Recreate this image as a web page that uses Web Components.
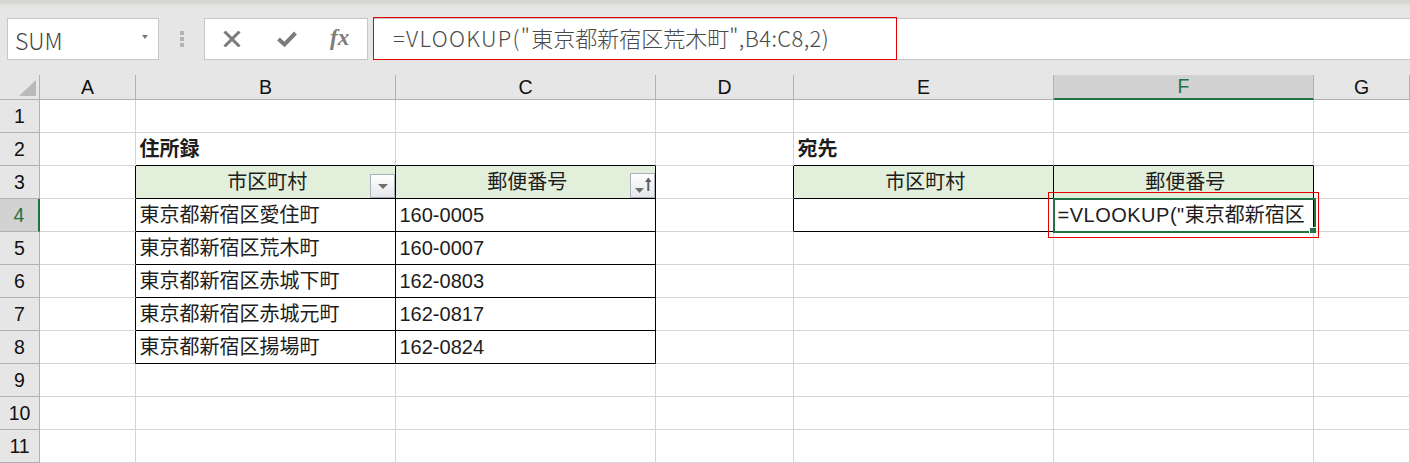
<!DOCTYPE html>
<html lang="ja">
<head>
<meta charset="utf-8">
<title>VLOOKUP</title>
<style>
    html, body { margin: 0; background: #fff; overflow: hidden; }
</style>
</head>
<body>
<excel-window></excel-window>

<script>
const TEXT_FONT = `"Liberation Sans", "Noto Sans CJK JP", sans-serif`;

class FormulaBar extends HTMLElement {
    connectedCallback() {
        let shadowRoot = this.attachShadow({mode: 'open'})
        shadowRoot.innerHTML = `
        <style>
            :host {
                display: block;
                height: 75px;
                box-sizing: border-box;
                background: linear-gradient(#d6d5d3 0, #d6d5d3 3px, #e2e2e1 5px, #e6e6e6 8px);
                padding-top: 18px;
                font-family: ${TEXT_FONT};
            }
            .row { display: flex; align-items: flex-start; height: 42px; }
            .name {
                width: 152px;
                height: 42px;
                margin-left: 7px;
                box-sizing: border-box;
                background: #fff;
                border: 1px solid #c6c6c6;
                display: flex;
                align-items: center;
                justify-content: space-between;
                padding: 1px 10px 0 7px;
                font-family: "Noto Sans CJK JP", sans-serif;
                font-weight: 300;
                font-size: 23px;
                color: #444;
            }
            .name i {
                margin-top: -6px;
                border: 3.5px solid transparent;
                border-top: 4px solid #777;
                border-bottom: 0;
            }
            .grip {
                width: 45px;
                display: flex;
                flex-direction: column;
                align-items: center;
                gap: 2px;
                padding-top: 13px;
            }
            .grip b { width: 4px; height: 4px; background: #b4b4b4; }
            .buttons {
                width: 164px;
                height: 42px;
                box-sizing: border-box;
                background: #fff;
                border: 1px solid #c6c6c6;
                display: flex;
                align-items: center;
            }
            .buttons svg { display: block; }
            .fx {
                font: italic bold 23px "Liberation Serif", serif;
                color: #7c7c7c;
                margin-left: 33px;
                margin-top: -2px;
            }
            .input {
                position: relative;
                flex: 1;
                height: 42px;
                margin-left: 5px;
                box-sizing: border-box;
                background: #fff;
                border-bottom: 1px solid #c6c6c6;
                border-top: 1px solid #c6c6c6;
                padding-left: 20px;
                line-height: 36px;
                font-size: 22px;
                color: #4a4a4a;
                font-family: "Noto Sans CJK JP", sans-serif;
                font-weight: 300;
                white-space: nowrap;
            }
            .input .head { letter-spacing: 1.3px; }
            .input .tail { letter-spacing: .4px; }
            .mark {
                position: absolute;
                left: 0;
                top: -2px;
                width: 524px;
                height: 43px;
                box-sizing: border-box;
                border: 1px solid #e60000;
            }
        </style>
        <div class="row">
            <div class="name">SUM<i></i></div>
            <div class="grip"><b></b><b></b><b></b></div>
            <div class="buttons">
                <svg width="18" height="16" viewBox="0 0 18 16" style="margin-left:18px">
                    <path d="M1.5 .5 L16.5 15.5 M16.5 .5 L1.5 15.5" stroke="#7c7c7c" stroke-width="3" fill="none"/>
                </svg>
                <svg width="20" height="16" viewBox="0 0 20 16" style="margin-left:36px">
                    <path d="M1.5 8 L7.5 13.5 L18.5 2" stroke="#7c7c7c" stroke-width="4" fill="none"/>
                </svg>
                <span class="fx">fx</span>
            </div>
            <div class="input"><span class="head">=VLOOKUP("</span>東京都新宿区荒木町<span class="tail">",B4:C8,2)</span><div class="mark"></div></div>
        </div>
        `
    }
}

class FilterButton extends HTMLElement {
    connectedCallback() {
        let sorted = this.hasAttribute('sorted')
        let shadowRoot = this.attachShadow({mode: 'open'})
        shadowRoot.innerHTML = `
        <style>
            :host {
                position: absolute;
                right: 0;
                bottom: 0;
                box-sizing: border-box;
                border: 1px solid #aab1ba;
                background: linear-gradient(#fff, #e6e7ea);
                display: block;
            }
            svg { display: block; }
        </style>
        ${sorted
            ? `<svg width="23" height="23" viewBox="0 0 23 23">
                <path d="M4 14 H13 L8.5 19 Z" fill="#6f6f6f"/>
                <path d="M17.3 17 V6" stroke="#606060" stroke-width="2" fill="none"/>
                <path d="M14 8 L17.3 3.5 L20.6 8 Z" fill="#606060"/>
               </svg>`
            : `<svg width="23" height="22" viewBox="0 0 23 22">
                <path d="M7 9 H17 L12 14 Z" fill="#6f6f6f"/>
               </svg>`}
        `
    }
}

class SheetCell extends HTMLElement {
    connectedCallback() {
        let shadowRoot = this.attachShadow({mode: 'open'})
        shadowRoot.innerHTML = `
        <style>
            :host {
                position: relative;
                box-sizing: border-box;
                border-right: 1px solid var(--right, #d4d4d4);
                border-bottom: 1px solid var(--bottom, #d4d4d4);
                background: var(--fill, #fff);
                display: flex;
                align-items: center;
                justify-content: var(--align, flex-start);
                padding-left: 3.5px;
                font-size: 20px;
                line-height: 32px;
                color: #1d1d1d;
                white-space: nowrap;
            }
        </style>
        <slot></slot>
        `
    }
}

class SheetHeader extends HTMLElement {
    connectedCallback() {
        let shadowRoot = this.attachShadow({mode: 'open'})
        shadowRoot.innerHTML = `
        <style>
            :host {
                box-sizing: border-box;
                background: #e6e6e6;
                border-right: 1px solid #b1b1b1;
                border-bottom: 1px solid #b1b1b1;
                display: flex;
                align-items: center;
                justify-content: center;
                font-size: 19.5px;
                color: #111;
            }
            :host([active]) {
                background: #d2d2d2;
                color: #217346;
            }
            :host([active="col"]) { border-bottom: 2px solid #217346; }
            :host([active="row"]) { border-right: 2px solid #217346; }
        </style>
        <slot></slot>
        `
    }
}

class ExcelSheet extends HTMLElement {
    connectedCallback() {
        let table = {
            '2B': '<b>住所録</b>', '2E': '<b>宛先</b>',
            '3B': '市区町村', '3C': '郵便番号', '3E': '市区町村', '3F': '郵便番号',
            '4B': '東京都新宿区愛住町', '4C': '160-0005',
            '4F': '<span class="wide">=VLOOKUP("</span>東京都新宿区',
            '5B': '東京都新宿区荒木町', '5C': '160-0007',
            '6B': '東京都新宿区赤城下町', '6C': '162-0803',
            '7B': '東京都新宿区赤城元町', '7C': '162-0817',
            '8B': '東京都新宿区揚場町', '8C': '162-0824',
        }
        let inBox = (r, c) => ('BC'.includes(c) && r >= 3 && r <= 8) || ('EF'.includes(c) && r >= 3 && r <= 4)
        let cols = ['A', 'B', 'C', 'D', 'E', 'F', 'G']
        let html = `<sheet-header class="corner"></sheet-header>`
        cols.forEach(c => {
            html += `<sheet-header ${c == 'F' ? 'active="col"' : ''}>${c}</sheet-header>`
        })
        for (let r = 1; r <= 11; r++) {
            html += `<sheet-header ${r == 4 ? 'active="row"' : ''}>${r}</sheet-header>`
            cols.forEach((c, i) => {
                let next = cols[i + 1]
                let vars = []
                if (inBox(r, c) || (next && inBox(r, next))) vars.push('--right:#000')
                if (inBox(r, c) || inBox(r + 1, c)) vars.push('--bottom:#000')
                if (r == 3 && inBox(r, c)) vars.push('--fill:#e2efda', '--align:center')
                let inner = table[r + c] || ''
                if (r + c == '3B') inner += '<filter-button></filter-button>'
                if (r + c == '3C') inner += '<filter-button sorted></filter-button>'
                html += `<sheet-cell style="${vars.join(';')}">${inner}</sheet-cell>`
            })
        }
        let shadowRoot = this.attachShadow({mode: 'open'})
        shadowRoot.innerHTML = `
        <style>
            :host {
                position: relative;
                display: grid;
                grid-template-columns: 40px 96px 260px 260px 138px 260px 260px 1fr;
                grid-template-rows: 25px repeat(11, 33px);
                font-family: ${TEXT_FONT};
            }
            b { font-weight: 700; }
            .wide { letter-spacing: .5px; }
            .tri {
                position: absolute;
                left: 19px;
                top: 5px;
                width: 0;
                height: 0;
                border-left: 17px solid transparent;
                border-bottom: 16px solid #b9b9b9;
            }
            .selection {
                position: absolute;
                left: 1053px;
                top: 123px;
                width: 263px;
                height: 35px;
                box-sizing: border-box;
                border: 2px solid #217346;
            }
            .selection i {
                position: absolute;
                right: -2px;
                bottom: -2px;
                width: 6px;
                height: 5px;
                background: #217346;
                border: 1px solid #fff;
                border-right: 0;
                border-bottom: 0;
            }
            .mark {
                position: absolute;
                left: 1048px;
                top: 117px;
                width: 271px;
                height: 46px;
                box-sizing: border-box;
                border: 1px solid #e60000;
            }
        </style>
        ${html}
        <div class="tri"></div>
        <div class="selection"><i></i></div>
        <div class="mark"></div>
        `
    }
}

class ExcelWindow extends HTMLElement {
    connectedCallback() {
        let shadowRoot = this.attachShadow({mode: 'open'})
        shadowRoot.innerHTML = `
        <style>
            :host { display: block; width: 1410px; height: 463px; overflow: hidden; }
        </style>
        <formula-bar></formula-bar>
        <excel-sheet></excel-sheet>
        `
    }
}

window.customElements.define('formula-bar', FormulaBar);
window.customElements.define('filter-button', FilterButton);
window.customElements.define('sheet-cell', SheetCell);
window.customElements.define('sheet-header', SheetHeader);
window.customElements.define('excel-sheet', ExcelSheet);
window.customElements.define('excel-window', ExcelWindow);
</script>
</body>
</html>
